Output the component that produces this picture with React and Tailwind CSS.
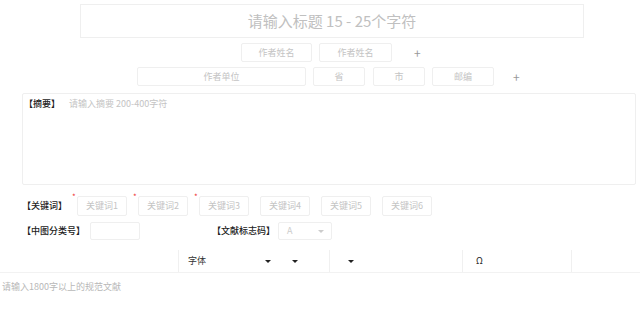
import React from "react";

const font = { fontFamily: '"Noto Sans CJK SC", "Noto Sans", sans-serif' };

const Box = ({ w, children, className = "" }) => (
  <div className={`${w} h-full border border-[#efefef] rounded-[2px] flex items-center justify-center text-[9px] text-[#c4c4c4] ${className}`}>
    {children}
  </div>
);

const Caret = () => (
  <span className="inline-block w-0 h-0 border-l-[3px] border-r-[3px] border-t-[3px] border-l-transparent border-r-transparent border-t-[#222]" />
);

const keywords = ["关键词1", "关键词2", "关键词3", "关键词4", "关键词5", "关键词6"];

export default function App() {
  return (
    <div className="w-[640px] h-[326px] bg-white overflow-hidden relative" style={font}>
      {/* title */}
      <div className="pt-[4px] pl-[80px]">
        <div className="w-[504px] h-[34px] border border-[#efefef] flex items-center justify-center text-[15px] text-[#c0c0c0]">
          请输入标题 15 - 25个字符
        </div>
      </div>

      {/* authors */}
      <div className="mt-[5px] h-[19px] flex items-center pl-[241px]">
        <Box w="w-[71px]">作者姓名</Box>
        <Box w="w-[73px]" className="ml-[7px]">作者姓名</Box>
        <span className="ml-[22px] text-[12px] text-[#999] leading-none">+</span>
      </div>

      {/* units */}
      <div className="mt-[5px] h-[19px] flex items-center pl-[137px]">
        <Box w="w-[169px]">作者单位</Box>
        <Box w="w-[52px]" className="ml-[7px]">省</Box>
        <Box w="w-[52px]" className="ml-[8px]">市</Box>
        <Box w="w-[62px]" className="ml-[7px]">邮编</Box>
        <span className="ml-[19px] text-[12px] text-[#999] leading-none">+</span>
      </div>

      {/* abstract */}
      <div className="mt-[7px] ml-[22px] w-[614px] h-[92px] border border-[#efefef] rounded-[2px] flex items-start pt-[3px]">
        <span className="text-[9px] font-medium text-[#222] ml-[1px]">【摘要】</span>
        <span className="text-[9px] text-[#c4c4c4] ml-[9px]">请输入摘要 200-400字符</span>
      </div>

      {/* keywords */}
      <div className="mt-[11px] h-[20px] flex items-center pl-[22px]">
        <span className="text-[9px] font-medium text-[#222] w-[55px]">【关键词】</span>
        <div className="flex h-full gap-[11px]">
          {keywords.map((k, i) => (
            <div key={k} className="relative h-full">
              {i < 3 && (
                <span className="absolute -left-[5px] -top-[3px] text-[8px] text-[#e33] leading-none">*</span>
              )}
              <Box w="w-[50px]">{k}</Box>
            </div>
          ))}
        </div>
      </div>

      {/* classification */}
      <div className="mt-[6px] h-[18px] flex items-center pl-[22px]">
        <span className="text-[9px] font-medium text-[#222] w-[68px]">【中图分类号】</span>
        <Box w="w-[50px]" />
        <span className="ml-[72px] text-[9px] font-medium text-[#222] w-[66px]">【文献标志码】</span>
        <div className="w-[54px] h-full border border-[#efefef] rounded-[2px] flex items-center justify-between pl-[8px] pr-[7px] text-[9px] text-[#cccccc]">
          <span>A</span>
          <span className="inline-block w-0 h-0 border-l-[3px] border-r-[3px] border-t-[3px] border-l-transparent border-r-transparent border-t-[#ccc]" />
        </div>
      </div>

      {/* toolbar */}
      <div className="mt-[10px] h-[23px] flex items-stretch border-b border-[#f2f2f2] text-[9px] text-[#333]">
        <div className="w-[179px] border-r border-[#f0f0f0]" />
        <div className="w-[151px] border-r border-[#f0f0f0] flex items-center pl-[9px]">
          <span>字体</span>
          <span className="ml-[59px] flex"><Caret /></span>
          <span className="ml-[21px] flex"><Caret /></span>
        </div>
        <div className="w-[133px] border-r border-[#f0f0f0] flex items-center pl-[18px]">
          <Caret />
        </div>
        <div className="w-[109px] border-r border-[#f0f0f0] flex items-center pl-[13px]">
          <span className="text-[9px] text-[#222]">Ω</span>
        </div>
        <div className="flex-1" />
      </div>

      {/* body */}
      <div className="pl-[2px] pt-[7px] text-[9px] text-[#b8b8b8]">请输入1800字以上的规范文献</div>
    </div>
  );
}
